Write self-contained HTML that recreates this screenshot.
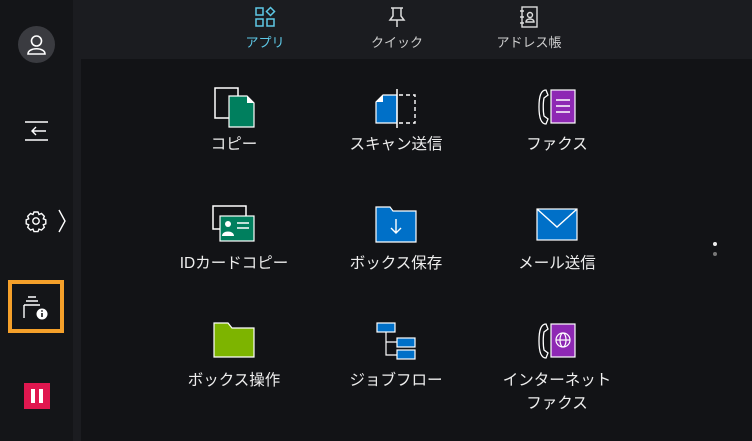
<!DOCTYPE html>
<html><head><meta charset="utf-8"><style>
*{margin:0;padding:0;box-sizing:border-box}
body{width:752px;height:441px;background:#1b1c20;font-family:"Liberation Sans","Noto Sans CJK JP",sans-serif;color:#e8e8e8;position:relative;overflow:hidden}
.side{position:absolute;left:0;top:0;width:73px;height:441px;background:#141518}
.content{position:absolute;left:81px;top:59px;width:671px;height:382px;background:#121316}
.tab{position:absolute;top:5px;width:100px;text-align:center;font-size:13px}
.tab svg{display:block;margin:0 auto 3px}
.item{position:absolute;width:160px;text-align:center;font-size:15.5px;line-height:23px;color:#eee}
.item svg{position:absolute;left:50%;transform:translateX(-50%)}
.abs{position:absolute}
</style></head><body>
<div class="side"></div>
<div class="content"></div>

<div class="abs" style="left:18px;top:26px;width:37px;height:37px;border-radius:50%;background:#3a3b40"></div>
<svg class="abs" style="left:18px;top:26px" width="37" height="37" viewBox="0 0 37 37"><circle cx="18.5" cy="15" r="5" fill="none" stroke="#fff" stroke-width="1.6"/><path d="M10 28 C10 21 27 21 27 28 Z" fill="none" stroke="#fff" stroke-width="1.6"/></svg>
<svg class="abs" style="left:24px;top:120px" width="26" height="22" viewBox="0 0 26 22"><path d="M1 2H24M1 20H24M22 11H8M12 7L8 11L12 15" fill="none" stroke="#fff" stroke-width="1.4"/></svg>
<svg class="abs" style="left:25px;top:208px" width="44" height="26" viewBox="0 0 44 26"><g fill="none" stroke="#fff" stroke-width="1.4"><circle cx="11" cy="13" r="3.2"/><path d="M9 4h4l1 2.5 2.5-1 2.8 2.8-1 2.5 2.5 1v4l-2.5 1 1 2.5-2.8 2.8-2.5-1-1 2.5h-4l-1-2.5-2.5 1-2.8-2.8 1-2.5-2.5-1v-4l2.5-1-1-2.5 2.8-2.8 2.5 1z"/><path d="M34 2L40 13L34 24"/></g></svg>
<div class="abs" style="left:8px;top:280px;width:56px;height:53px;border:4px solid #f5a02a"></div>
<svg class="abs" style="left:22px;top:292px" width="30" height="30" viewBox="0 0 30 30"><g fill="none" stroke="#fff" stroke-width="1.4"><path d="M6 5h8M4 9h12M2 13h16M2 13v13"/></g><circle cx="20" cy="22" r="5.5" fill="#fff"/><rect x="19.2" y="21" width="1.6" height="4" fill="#141518"/><circle cx="20" cy="19" r="0.9" fill="#141518"/></svg>
<div class="abs" style="left:24px;top:383px;width:26px;height:26px;background:#e0174f"></div>
<div class="abs" style="left:31px;top:389px;width:4px;height:14px;background:#fff"></div>
<div class="abs" style="left:39px;top:389px;width:4px;height:14px;background:#fff"></div>

<div class="tab" style="left:215px;color:#5ec8e6"><svg width="24" height="24" viewBox="0 0 24 24"><g fill="none" stroke="#5ec8e6" stroke-width="1.5"><rect x="3" y="3" width="7" height="7"/><rect x="3" y="14" width="7" height="7"/><rect x="14" y="14" width="7" height="7"/><path d="M17.5 2.5L21.5 6.5L17.5 10.5L13.5 6.5Z"/></g></svg>アプリ</div>
<div class="tab" style="left:347px;color:#cfcfcf"><svg width="24" height="24" viewBox="0 0 24 24"><g fill="none" stroke="#ddd" stroke-width="1.5"><path d="M6 3h12M8 3v8l-3 4h14l-3-4V3M12 15v7"/></g></svg>クイック</div>
<div class="tab" style="left:479px;color:#cfcfcf"><svg width="24" height="24" viewBox="0 0 24 24"><g fill="none" stroke="#ddd" stroke-width="1.4"><rect x="5" y="2" width="15" height="20"/><circle cx="13" cy="10" r="2.5"/><path d="M9 17c0-4 8-4 8 0z"/><path d="M3 6h4M3 12h4M3 18h4"/></g></svg>アドレス帳</div>

<div class="item" style="left:154px;top:133px">コピー<svg style="top:-47px" width="42" height="42" viewBox="0 0 42 42"><rect x="2" y="2" width="23" height="30" fill="none" stroke="#fff" stroke-width="1.5"/><path d="M16 10h18l7 7v24H16z" fill="#007f5e" stroke="#fff" stroke-width="1.2"/><path d="M34 10v7h7" fill="#fff"/></svg></div>
<div class="item" style="left:316px;top:133px">スキャン送信<svg style="top:-47px" width="44" height="42" viewBox="0 0 44 42"><path d="M9 9h14v28H2V16z" fill="#0070c8" stroke="#fff" stroke-width="1.2"/><path d="M2 16h7V9z" fill="#fff"/><path d="M23 3v39" stroke="#fff" stroke-width="1.5"/><path d="M25 9h16v28H25" fill="none" stroke="#fff" stroke-width="1.4" stroke-dasharray="4 3"/></svg></div>
<div class="item" style="left:477px;top:133px">ファクス<svg style="top:-47px" width="42" height="42" viewBox="0 0 42 42"><path d="M10 4c-5 0-7 6-7 17s2 17 7 17l2-5-4-3c-1-5-1-13 0-18l4-3z" fill="none" stroke="#fff" stroke-width="1.3"/><rect x="15" y="4" width="24" height="33" fill="#8e28b4" stroke="#fff" stroke-width="1.2"/><path d="M20 14h14M20 20h14M20 26h14" stroke="#fff" stroke-width="1.4"/></svg></div>

<div class="item" style="left:154px;top:252px">IDカードコピー<svg style="top:-48px" width="44" height="40" viewBox="0 0 44 40"><rect x="1" y="2" width="33" height="23" fill="none" stroke="#fff" stroke-width="1.5"/><rect x="8" y="12" width="34" height="25" fill="#007f5e" stroke="#fff" stroke-width="1.2"/><circle cx="16" cy="20" r="3" fill="#fff"/><path d="M10 32c0-6 12-6 12 0z" fill="#fff"/><path d="M25 19h12M25 24h12" stroke="#fff" stroke-width="1.4"/></svg></div>
<div class="item" style="left:316px;top:252px">ボックス保存<svg style="top:-47px" width="42" height="38" viewBox="0 0 42 38"><path d="M1 2h14l3 4h23v31H1z" fill="#0070c8" stroke="#fff" stroke-width="1.2"/><path d="M21 14v14M16 23l5 5 5-5" fill="none" stroke="#fff" stroke-width="1.4"/></svg></div>
<div class="item" style="left:477px;top:252px">メール送信<svg style="top:-44px" width="42" height="33" viewBox="0 0 42 33"><rect x="1" y="1" width="40" height="31" fill="#0070c8" stroke="#fff" stroke-width="1.2"/><path d="M1 1l20 18 20-18" fill="none" stroke="#fff" stroke-width="1.4"/></svg></div>

<div class="item" style="left:154px;top:369px">ボックス操作<svg style="top:-47px" width="42" height="36" viewBox="0 0 42 36"><path d="M1 1h14l4 5h22v29H1z" fill="#7db400" stroke="#fff" stroke-width="1.2"/></svg></div>
<div class="item" style="left:316px;top:369px">ジョブフロー<svg style="top:-47px" width="40" height="38" viewBox="0 0 40 38"><rect x="1" y="1" width="18" height="9" fill="#0070c8" stroke="#fff" stroke-width="1.2"/><rect x="21" y="16" width="18" height="9" fill="#0070c8" stroke="#fff" stroke-width="1.2"/><rect x="21" y="28" width="18" height="9" fill="#0070c8" stroke="#fff" stroke-width="1.2"/><path d="M10 10v23h11M10 20h11" fill="none" stroke="#fff" stroke-width="1.2"/></svg></div>
<div class="item" style="left:477px;top:369px">インターネット<br>ファクス<svg style="top:-47px" width="42" height="38" viewBox="0 0 42 38"><path d="M10 2c-5 0-7 6-7 17s2 17 7 17l2-5-4-3c-1-5-1-13 0-18l4-3z" fill="none" stroke="#fff" stroke-width="1.3"/><rect x="15" y="2" width="24" height="33" fill="#8e28b4" stroke="#fff" stroke-width="1.2"/><g fill="none" stroke="#fff" stroke-width="1.2"><circle cx="27" cy="18" r="7"/><ellipse cx="27" cy="18" rx="3" ry="7"/><path d="M20 18h14"/></g></svg></div>

<div class="abs" style="left:713px;top:242px;width:4px;height:4px;border-radius:50%;background:#eee"></div>
<div class="abs" style="left:713px;top:252px;width:4px;height:4px;border-radius:50%;background:#777"></div>
</body></html>
